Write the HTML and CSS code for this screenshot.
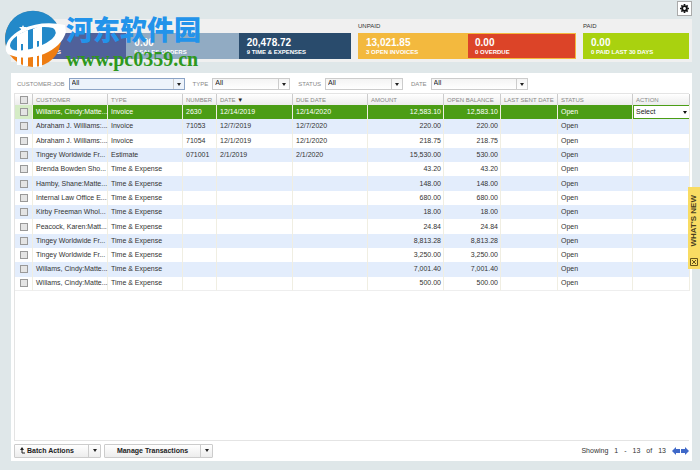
FILE: index.html
```html
<!DOCTYPE html>
<html lang="en">
<head>
    <meta charset="UTF-8">
    <meta name="viewport" content="width=device-width, initial-scale=1.0">
    <title>Customer Transactions</title>
    <link rel="stylesheet" href="styles.css">
</head>
<body>
    <div class="toolbar">
        <button class="gear" aria-label="Settings">
            <svg viewBox="0 0 16 16" width="9" height="9">
                <circle cx="8" cy="8" r="4.2" fill="none" stroke="#111" stroke-width="3.4"/>
                <path d="M8 0v3M8 13v3M0 8h3M13 8h3M2.4 2.4l2 2M11.6 11.6l2 2M2.4 13.6l2-2M11.6 4.4l2-2" stroke="#111" stroke-width="3"/>
            </svg>
        </button>
    </div>

    <div class="summary">
        <section class="group unbilled">
            <h2>UNBILLED</h2>
            <div class="tiles">
                <div class="tile estimates"><strong>530.00</strong><span>1 ESTIMATES</span></div>
                <div class="tile orders"><strong>0.00</strong><span>0 SALES ORDERS</span></div>
                <div class="tile time"><strong>20,478.72</strong><span>9 TIME &amp; EXPENSES</span></div>
            </div>
        </section>
        <section class="group unpaid">
            <h2>UNPAID</h2>
            <div class="tiles">
                <div class="tile invoices"><strong>13,021.85</strong><span>3 OPEN INVOICES</span></div>
                <div class="tile overdue"><strong>0.00</strong><span>0 OVERDUE</span></div>
            </div>
        </section>
        <section class="group paid">
            <h2>PAID</h2>
            <div class="tiles">
                <div class="tile last-paid"><strong>0.00</strong><span>0 PAID LAST 30 DAYS</span></div>
            </div>
        </section>
    </div>

    <div class="watermark">
        <svg viewBox="0 0 58 58" width="58" height="58" aria-hidden="true">
            <circle cx="29" cy="29" r="28" fill="#ee7d12"/>
            <path d="M2 36A28 28 0 0 1 54 16Q57 26 42 35Q24 45 7 41Q3 40 2 36Z" fill="#2389c9"/>
            <path d="M13 25l11-5v36h-5V34h-2v21h-4zM29 19l9-4v42h-3V31h-2v26h-4z" fill="#fff"/>
            <path d="M2 41Q0 29 18 19Q38 10 61 15L62 22Q58 36 40 44Q20 51 6 45Q3 44 2 41ZM6 36Q7 42 20 40Q37 38 48 29Q55 22 49 18Q36 15 22 21Q6 28 6 36Z" fill="#fff" fill-rule="evenodd"/>
            <path d="M19 15l1 2 3 0-2 2 1 3-3-1-2 1 0-3-2-2h3z" fill="#fff"/>
        </svg>
        <div class="watermark-text">
            <span class="site-name" lang="zh">河东软件园</span>
            <span class="site-url">www.pc0359.cn</span>
        </div>
    </div>

    <main class="panel">
        <form class="filters">
            <label for="customer">CUSTOMER:JOB</label>
            <span class="picker active wide"><select id="customer"><option>All</option></select></span>
            <label for="type">TYPE</label>
            <span class="picker"><select id="type"><option>All</option></select></span>
            <label for="status">STATUS</label>
            <span class="picker"><select id="status"><option>All</option></select></span>
            <label for="date">DATE</label>
            <span class="picker date"><select id="date"><option>All</option></select></span>
        </form>

        <div class="grid">
            <table>
                <colgroup>
                    <col class="c-check"><col class="c-wide"><col class="c-wide"><col class="c-number"><col class="c-amount"><col class="c-wide"><col class="c-amount"><col class="c-mid"><col class="c-mid"><col class="c-wide"><col class="c-mid">
                </colgroup>
                <thead>
                    <tr>
                        <th><input type="checkbox" aria-label="Select all"></th>
                        <th>CUSTOMER</th><th>TYPE</th><th>NUMBER</th><th>DATE <span class="sort">▼</span></th><th>DUE DATE</th><th>AMOUNT</th><th>OPEN BALANCE</th><th>LAST SENT DATE</th><th>STATUS</th><th>ACTION</th>
                    </tr>
                </thead>
                <tbody>
                    <tr class="selected"><td><input type="checkbox" aria-label="Select row 1"></td><td>Willams, Cindy:Matte...</td><td>Invoice</td><td>2630</td><td>12/14/2019</td><td>12/14/2020</td><td class="num">12,583.10</td><td class="num">12,583.10</td><td></td><td>Open</td><td class="action"><select aria-label="Action"><option>Select</option></select></td></tr>
                    <tr><td><input type="checkbox" aria-label="Select row 2"></td><td>Abraham J. Williams:...</td><td>Invoice</td><td>71053</td><td>12/7/2019</td><td>12/7/2020</td><td class="num">220.00</td><td class="num">220.00</td><td></td><td>Open</td><td></td></tr>
                    <tr><td><input type="checkbox" aria-label="Select row 3"></td><td>Abraham J. Williams:...</td><td>Invoice</td><td>71054</td><td>12/1/2019</td><td>12/1/2020</td><td class="num">218.75</td><td class="num">218.75</td><td></td><td>Open</td><td></td></tr>
                    <tr><td><input type="checkbox" aria-label="Select row 4"></td><td>Tingey Worldwide Fr...</td><td>Estimate</td><td>071001</td><td>2/1/2019</td><td>2/1/2020</td><td class="num">15,530.00</td><td class="num">530.00</td><td></td><td>Open</td><td></td></tr>
                    <tr><td><input type="checkbox" aria-label="Select row 5"></td><td>Brenda Bowden Sho...</td><td>Time &amp; Expense</td><td></td><td></td><td></td><td class="num">43.20</td><td class="num">43.20</td><td></td><td>Open</td><td></td></tr>
                    <tr><td><input type="checkbox" aria-label="Select row 6"></td><td>Hamby, Shane:Matte...</td><td>Time &amp; Expense</td><td></td><td></td><td></td><td class="num">148.00</td><td class="num">148.00</td><td></td><td>Open</td><td></td></tr>
                    <tr><td><input type="checkbox" aria-label="Select row 7"></td><td>Internal Law Office E...</td><td>Time &amp; Expense</td><td></td><td></td><td></td><td class="num">680.00</td><td class="num">680.00</td><td></td><td>Open</td><td></td></tr>
                    <tr><td><input type="checkbox" aria-label="Select row 8"></td><td>Kirby Freeman Whol...</td><td>Time &amp; Expense</td><td></td><td></td><td></td><td class="num">18.00</td><td class="num">18.00</td><td></td><td>Open</td><td></td></tr>
                    <tr><td><input type="checkbox" aria-label="Select row 9"></td><td>Peacock, Karen:Matt...</td><td>Time &amp; Expense</td><td></td><td></td><td></td><td class="num">24.84</td><td class="num">24.84</td><td></td><td>Open</td><td></td></tr>
                    <tr><td><input type="checkbox" aria-label="Select row 10"></td><td>Tingey Worldwide Fr...</td><td>Time &amp; Expense</td><td></td><td></td><td></td><td class="num">8,813.28</td><td class="num">8,813.28</td><td></td><td>Open</td><td></td></tr>
                    <tr><td><input type="checkbox" aria-label="Select row 11"></td><td>Tingey Worldwide Fr...</td><td>Time &amp; Expense</td><td></td><td></td><td></td><td class="num">3,250.00</td><td class="num">3,250.00</td><td></td><td>Open</td><td></td></tr>
                    <tr><td><input type="checkbox" aria-label="Select row 12"></td><td>Willams, Cindy:Matte...</td><td>Time &amp; Expense</td><td></td><td></td><td></td><td class="num">7,001.40</td><td class="num">7,001.40</td><td></td><td>Open</td><td></td></tr>
                    <tr><td><input type="checkbox" aria-label="Select row 13"></td><td>Willams, Cindy:Matte...</td><td>Time &amp; Expense</td><td></td><td></td><td></td><td class="num">500.00</td><td class="num">500.00</td><td></td><td>Open</td><td></td></tr>
                </tbody>
            </table>
        </div>

        <div class="actions">
            <div class="split batch">
                <button class="main">
                    <svg viewBox="0 0 5 7" width="5" height="7"><path d="M2 1v5h3" fill="none" stroke="#222"/><path d="M0 3l2-3 2 3z" fill="#222"/></svg>
                    Batch Actions
                </button>
                <button class="drop" aria-label="Batch options"></button>
            </div>
            <div class="split manage">
                <button class="main">Manage Transactions</button>
                <button class="drop" aria-label="Manage options"></button>
            </div>
            <div class="pager">
                <span>Showing</span><span>1</span><span>-</span><span>13</span><span>of</span><span>13</span>
                <div class="arrows">
                    <button aria-label="Previous page"><svg viewBox="0 0 8 8" width="8" height="8"><path d="M0 4l4-4v2h4v4H4v2z" fill="#3f68c8"/></svg></button>
                    <button aria-label="Next page"><svg viewBox="0 0 8 8" width="8" height="8"><path d="M8 4L4 0v2H0v4h4v2z" fill="#3f68c8"/></svg></button>
                </div>
            </div>
        </div>
    </main>

    <aside class="whats-new">
        <a href="#">WHAT'S NEW</a>
        <button aria-label="Close">
            <svg viewBox="0 0 8 8" width="8" height="8"><path d="M.5.5h7v7h-7zM2 2l4 4M6 2L2 6" fill="none" stroke="#66551c"/></svg>
        </button>
    </aside>
</body>
</html>
```

FILE: styles.css
```css
* {
    box-sizing: border-box;
}
body {
    margin: 0;
    padding: 1px 8px 9px 11px;
    min-height: 100vh;
    display: flex;
    flex-direction: column;
    background: #dfe7e9;
    font-family: "Liberation Sans", Arial, sans-serif;
    font-size: 7px;
    line-height: 8px;
    color: #333;
}
button, select {
    margin: 0;
    padding: 0;
    font: inherit;
    color: inherit;
    border: none;
    background: none;
}
.toolbar {
    display: flex;
    justify-content: flex-end;
    height: 18px;
}
.gear {
    display: flex;
    align-items: center;
    justify-content: center;
    width: 15px;
    height: 15px;
    background: #fff;
    border: 1px solid #aaa;
}

/* summary bar */
.summary {
    display: flex;
    gap: 7px;
    padding: 3px;
    background: #f0f0f0;
}
.group h2 {
    margin: 0;
    height: 11px;
    font-size: 6px;
    font-weight: normal;
    line-height: 9px;
}
.unbilled {
    flex: 337;
}
.unpaid {
    flex: 218;
}
.paid {
    flex: 106;
}
.tiles {
    display: flex;
    height: 26px;
}
.tile {
    flex: 1;
    padding: 4px 8px;
    color: #fff;
    font-weight: bold;
    white-space: nowrap;
}
.tile strong, .tile span {
    display: block;
}
.tile strong {
    font-size: 10px;
    line-height: 11px;
}
.tile span {
    font-size: 6px;
    line-height: 8px;
}
.estimates {
    background: #50619a;
}
.orders {
    background: #91abc3;
}
.time {
    background: #294b6c;
}
.unpaid .tiles {
    background: #f3b93e;
}
.overdue {
    margin: 1px;
    padding: 3px 7px;
    background: #dc4428;
}
.last-paid {
    background: #a9d20f;
}

/* watermark lies over the summary bar */
.watermark {
    position: absolute;
    top: 10px;
    left: 4px;
    display: flex;
    gap: 4px;
}
.watermark svg {
    overflow: visible;
}
.watermark-text {
    display: flex;
    flex-direction: column;
}
.site-name {
    font: 900 27px/38px "Noto Sans CJK SC", sans-serif;
    color: #2293ea;
}
.site-url {
    font: bold 20px/22px "Liberation Serif", serif;
    color: #2d981d;
}

/* transactions panel */
.panel {
    flex: 1;
    display: flex;
    flex-direction: column;
    margin-top: 11px;
    padding: 4px 3px 3px;
    background: #fff;
}
.filters {
    display: flex;
    align-items: center;
    padding-left: 3px;
    height: 13px;
    font-size: 6px;
    color: #888;
}
.filters label {
    padding-right: 4px;
}
.picker {
    position: relative;
    width: 78px;
    margin-right: 8px;
}
.picker.wide {
    width: 116px;
}
.picker.date {
    width: 97px;
}
.picker select {
    display: block;
    appearance: none;
    width: 100%;
    height: 12px;
    padding: 0 2px 2px;
    font-size: 7px;
    color: #222;
    background: linear-gradient(#f4f4f4, #fff);
    border: 1px solid #ccc;
}
.picker.active select {
    background: #edf3fb;
    border-color: #8ba3c5;
}
.picker::before {
    content: "";
    position: absolute;
    top: 1px;
    right: 11px;
    height: 10px;
    border-left: 1px solid #ccc;
    pointer-events: none;
}
.picker::after {
    content: "";
    position: absolute;
    top: 5px;
    right: 4px;
    border: 2px solid transparent;
    border-top: 3px solid #222;
    border-bottom: none;
    pointer-events: none;
}
.grid {
    flex: 1;
    margin-top: 3px;
    border: 1px solid #e4e4e4;
    border-right: none;
}
table {
    width: 100%;
    height: 197px;
    table-layout: fixed;
    border-collapse: separate;
    border-spacing: 0;
}
.c-check {
    width: 18px;
}
.c-wide {
    width: 75px;
}
.c-number {
    width: 34px;
}
.c-amount {
    width: 76px;
}
.c-mid {
    width: 57px;
}
th, td {
    padding: 0 2px 0 3px;
    text-align: left;
    white-space: nowrap;
    border-right: 1px solid #f0eee2;
}
td:nth-child(2) {
    padding-right: 0;
}
th {
    height: 11px;
    font-size: 6px;
    font-weight: normal;
    color: #888;
    background: linear-gradient(#fff, #ececec);
    border-right-color: #ccc;
}
tbody tr {
    height: 14px;
}
tbody tr:nth-child(even) {
    background: #e3edfc;
}
tbody tr:last-child td {
    border-bottom: 1px solid #eee;
}
.num {
    text-align: right;
}
th:first-child, td:first-child {
    text-align: center;
}
.sort {
    color: #222;
}
input[type="checkbox"] {
    appearance: none;
    display: block;
    width: 8px;
    height: 8px;
    margin: 0 auto;
    border: 1px solid #999;
    background: #e4e4e4;
}
tbody .selected {
    color: #fff;
    background: #4b9d15;
}
.selected td:first-child {
    background: #d5ecc6;
}
.selected .action {
    position: relative;
    padding: 0 0 0 1px;
}
.action select {
    display: block;
    appearance: none;
    width: 100%;
    height: 12px;
    padding: 0 2px;
    color: #222;
    background: #fff;
}
.action::after {
    content: "";
    position: absolute;
    top: 6px;
    right: 2px;
    border: 2px solid transparent;
    border-top: 3px solid #111;
    border-bottom: none;
    pointer-events: none;
}

/* footer */
.actions {
    display: flex;
    align-items: center;
    gap: 3px;
    margin-top: 2px;
    height: 15px;
}
.split {
    display: flex;
    width: 87px;
    height: 14px;
    border: 1px solid #ccc;
    border-radius: 1px;
    background: linear-gradient(#fff, #ededed);
}
.manage {
    width: 109px;
}
.split .main {
    flex: 1;
    display: flex;
    align-items: center;
    justify-content: center;
    gap: 2px;
    font-weight: bold;
    color: #222;
}
.batch .main {
    justify-content: flex-start;
    padding-left: 5px;
}
.drop {
    display: flex;
    align-items: center;
    justify-content: center;
    width: 12px;
    border-left: 1px solid #ccc;
}
.drop::after {
    content: "";
    border: 2px solid transparent;
    border-top: 3px solid #222;
    border-bottom: none;
}
.pager {
    display: flex;
    align-items: center;
    gap: 6px;
    margin-left: auto;
}
.arrows {
    display: flex;
    gap: 1px;
}
.arrows button, .arrows svg, .whats-new svg {
    display: block;
}

/* side tab */
.whats-new {
    position: absolute;
    top: 187px;
    right: 0;
    display: flex;
    flex-direction: column;
    align-items: center;
    justify-content: space-between;
    width: 12px;
    height: 82px;
    padding: 8px 0 3px;
    background: #f9dc63;
}
.whats-new a {
    writing-mode: vertical-rl;
    transform: rotate(180deg);
    font-size: 8px;
    font-weight: bold;
    color: #4a3e22;
    text-decoration: none;
}
```
